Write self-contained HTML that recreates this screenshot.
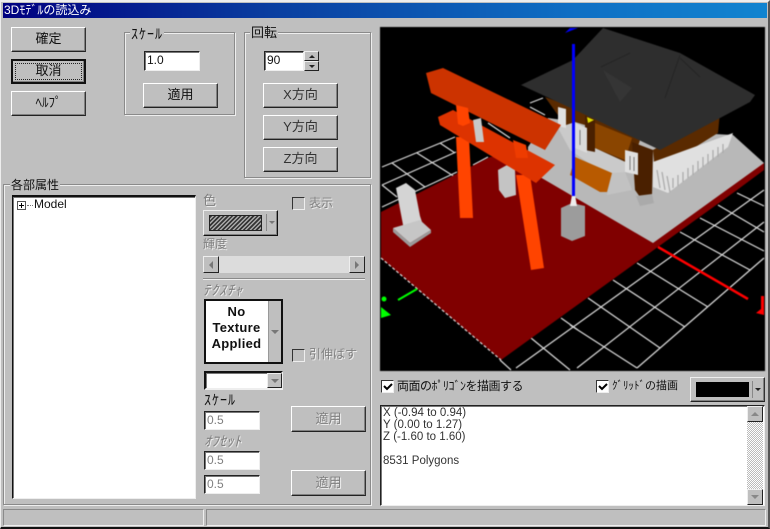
<!DOCTYPE html>
<html><head><meta charset="utf-8">
<style>
html,body{margin:0;padding:0}
body{width:770px;height:529px;overflow:hidden;position:relative;background:#bfbfbf;font:12px "Liberation Sans","Noto Sans CJK JP",sans-serif;color:#111}
div,span{position:absolute;box-sizing:border-box;white-space:nowrap}
.btn{background:#bfbfbf;border:1px solid;border-color:#fff #333 #222 #fff;box-shadow:inset -1px -1px 0 #808080;text-align:center;font-size:13px;line-height:22px;width:75px;height:25px}
.dis{color:#808080;text-shadow:1px 1px 0 #eee}
.inp{background:#fff;border:1px solid;border-color:#222 #eee #eee #222;box-shadow:inset 1px 1px 0 #777;padding-left:2px;font-size:12px;line-height:17px;width:56px;height:20px}
.grp{border:1px solid #8a8a8a;box-shadow:1px 1px 0 #eee,inset 1px 1px 0 #eee}
.leg{background:#bfbfbf;padding:0 1px;line-height:14px}
.chk{width:13px;height:13px;border:1px solid;border-color:#333 #eee #eee #333;background:#fff}
.arrow{width:15px;height:17px;background:#bfbfbf;border:1px solid;border-color:#eee #222 #222 #eee}
</style></head><body>
<div style="left:0;top:0;width:770px;height:529px;border:1px solid #222;border-left-color:#eee;border-top:2px solid #eee;border-right:2px solid #555;border-bottom:2px solid #111"></div>
<div style="left:3px;top:3px;width:764px;height:15px;background:linear-gradient(90deg,#000080,#0a3ea0 35%,#0f6fc4 75%,#1084d0);color:#fff;font-size:12px;line-height:15px;padding-left:1px">3Dﾓﾃﾞﾙの読込み</div>

<div class="btn" style="left:11px;top:27px">確定</div>
<div class="btn" style="left:11px;top:59px;border:2px solid #111;line-height:20px"><div style="left:2px;top:2px;width:67px;height:17px;border:1px dotted #222"></div>取消</div>
<div class="btn" style="left:11px;top:91px">ﾍﾙﾌﾟ</div>

<div class="grp" style="left:124px;top:32px;width:111px;height:83px"></div>
<div class="leg" style="left:130px;top:27px;font-size:14px;letter-spacing:1px">ｽｹｰﾙ</div>
<div class="inp" style="left:144px;top:51px">1.0</div>
<div class="btn" style="left:143px;top:83px">適用</div>

<div class="grp" style="left:244px;top:32px;width:127px;height:146px"></div>
<div class="leg" style="left:250px;top:26px;font-size:13px">回転</div>
<div class="inp" style="left:264px;top:51px;width:40px">90</div>
<div class="arrow" style="left:304px;top:51px;height:10px"><div style="left:4px;top:3px;border:3px solid transparent;border-top:0;border-bottom:3px solid #222;width:0;height:0"></div></div>
<div class="arrow" style="left:304px;top:61px;height:10px"><div style="left:4px;top:3px;border:3px solid transparent;border-bottom:0;border-top:3px solid #222;width:0;height:0"></div></div>
<div class="btn" style="left:263px;top:83px;color:#333">X方向</div>
<div class="btn" style="left:263px;top:115px;color:#333">Y方向</div>
<div class="btn" style="left:263px;top:147px;color:#333">Z方向</div>

<div class="grp" style="left:3px;top:184px;width:368px;height:321px"></div>
<div class="leg" style="left:10px;top:178px;font-size:12px">各部属性</div>
<div class="inp" style="left:12px;top:195px;width:184px;height:304px;border-width:2px 1px 1px 1px;border-color:#111 #eee #eee #111"></div>
<div style="left:17px;top:201px;width:9px;height:9px;border:1px solid #555;background:#fff"><div style="left:1px;top:3px;width:5px;height:1px;background:#000"></div><div style="left:3px;top:1px;width:1px;height:5px;background:#000"></div></div>
<div style="left:27px;top:205px;width:6px;border-top:1px dotted #777"></div>
<div style="left:34px;top:197px;line-height:14px">Model</div>

<div class="dis" style="left:203px;top:193px;line-height:16px;font-size:13px">色</div>
<div class="chk" style="left:292px;top:197px;background:#bfbfbf"></div>
<div class="dis" style="left:309px;top:196px;line-height:15px;font-size:12px">表示</div>
<div class="btn" style="left:203px;top:210px;height:26px;border-color:#eee #111 #111 #eee"><div style="left:5px;top:4px;width:53px;height:16px;border:1px solid #222;background:repeating-linear-gradient(135deg,#333 0,#333 1.5px,#aaa 1.5px,#aaa 3px)"></div><div style="left:62px;top:3px;width:1px;height:17px;background:#888"></div><div style="left:65px;top:10px;width:0;height:0;border:3px solid transparent;border-bottom:0;border-top:3px solid #777"></div></div>
<div class="dis" style="left:203px;top:236px;line-height:16px;font-size:12px">輝度</div>
<div style="left:203px;top:256px;width:162px;height:17px;background:#dcdcdc"></div>
<div class="arrow" style="left:203px;top:256px;width:16px"><div style="left:5px;top:4px;width:0;height:0;border:4px solid transparent;border-left:0;border-right:4px solid #777"></div></div>
<div class="arrow" style="left:349px;top:256px;width:16px"><div style="left:5px;top:4px;width:0;height:0;border:4px solid transparent;border-right:0;border-left:4px solid #777"></div></div>
<div style="left:203px;top:278px;width:162px;height:2px;background:#8a8a8a;border-bottom:1px solid #eee"></div>
<div class="dis" style="left:203px;top:283px;line-height:14px;font-size:14px;letter-spacing:1px;font-style:italic">ﾃｸｽﾁｬ</div>

<div style="left:204px;top:299px;width:79px;height:65px;background:#fff;border:2px solid #111;text-align:center;font-weight:bold;font-size:13px;line-height:16px;letter-spacing:.3px;padding:3px 14px 0 0;white-space:normal">No<br>Texture<br>Applied</div>
<div style="left:268px;top:301px;width:13px;height:61px;background:#bfbfbf;border-left:1px solid #999"><div style="left:2px;top:29px;width:0;height:0;border:4px solid transparent;border-bottom:0;border-top:4px solid #777"></div></div>
<div class="chk" style="left:292px;top:349px;background:#bfbfbf"></div>
<div class="dis" style="left:309px;top:347px;line-height:15px;font-size:12px">引伸ばす</div>
<div class="inp" style="left:204px;top:371px;width:79px;height:19px;border-width:2px;border-color:#111 #eee #eee #111"><div style="left:61px;top:0;width:15px;height:15px;background:#bfbfbf;border:1px solid;border-color:#eee #222 #222 #eee"><div style="left:3px;top:5px;width:0;height:0;border:4px solid transparent;border-bottom:0;border-top:4px solid #777"></div></div></div>
<div style="left:204px;top:393px;line-height:14px;font-size:14px;letter-spacing:1px">ｽｹｰﾙ</div>
<div class="inp dis" style="left:204px;top:411px;height:19px;text-shadow:none">0.5</div>
<div class="btn dis" style="left:291px;top:406px;height:26px;line-height:23px">適用</div>
<div class="dis" style="left:204px;top:434px;line-height:14px;font-size:14px;letter-spacing:.5px;font-style:italic">ｵﾌｾｯﾄ</div>
<div class="inp dis" style="left:204px;top:451px;height:19px;text-shadow:none">0.5</div>
<div class="inp dis" style="left:204px;top:475px;height:19px;text-shadow:none">0.5</div>
<div class="btn dis" style="left:291px;top:470px;height:26px;line-height:23px">適用</div>

<!-- 3D viewport -->
<svg style="position:absolute;left:380px;top:27px;filter:blur(.4px)" width="385" height="344" viewBox="380 27 385 344">
<rect x="380" y="27" width="385" height="344" fill="#000"/>
<g stroke="#ddd" stroke-width="1.2" fill="none">
<path d="M737 193L764 206M718 205L764 232M700 218L764 251M680 232L750 270M637 263L708 307M613 280L685 327M588 298L660 348M570 325L637 368M531 338L570 370M561 318L578 330M500 360L511 370"/>
<path d="M637 368L764 258M577 368L764 222M516 368L764 190"/>
<path d="M382 167L455 137M382 185L456 152M382 207L457 172M473 165L488 157M392 163L425 187M417 153L455 177M440 143L455 153M382 185L397 197M530 103L543 98M530 107L545 115M488 123L510 138"/>
</g>
<polygon points="381,212 490,157 600,150 730,160 764,163 764,170 737,190 501,360 381,258" fill="#800000"/>
<path d="M381 258L501 360" stroke="#ddd" stroke-width="1.2" stroke-dasharray="3 2" fill="none"/>
<!-- platform -->
<polygon points="528,170 528,147 548,118 640,130 733,135 764,163 653,243" fill="#b8b8b8"/>
<polygon points="558,128 575,122 625,150 625,172 610,178 570,150" fill="#cacaca"/>
<polygon points="612,173 625,172 632,190 607,195" fill="#c2c2c2"/>
<!-- walls -->
<polygon points="545,97 575,108 640,140 632,165 595,148 585,150 585,125 575,122 566,125 560,118" fill="#5a2a00"/>
<polygon points="595,123 632,138 625,160 595,148" fill="#8a4500"/>
<polygon points="585,115 595,120 595,152 585,150" fill="#4a2000"/>
<polygon points="653,150 720,112 718,133 655,172" fill="#5a2a00"/>
<polygon points="632,142 653,150 652,195 640,197 635,190" fill="#4a2000"/>
<polygon points="636,196 652,194 654,203 640,206" fill="#aaa"/>
<polygon points="558,107 566,109 566,128 558,126" fill="#e0e0e0"/>
<polygon points="575,123 587,128 587,153 575,148" fill="#dadada"/>
<polygon points="625,150 638,153 638,175 625,172" fill="#e0e0e0"/>
<path d="M630 156V170M634 157V171M580 130V145" stroke="#777" stroke-width="1"/>
<!-- box -->
<polygon points="575,157 612,173 607,192 600,192 570,175" fill="#b85a00"/>
<!-- railing -->
<polygon points="653,162 733,133 728,147 668,193 653,187" fill="#e0e0e0"/>
<path d="M657 170L660 188M662 172L665 190M667 176L670 192M673 178V188M678 175V186M683 172V182M688 168V178M693 165V175M698 161V171M703 157V167M708 154V164M713 150V160M718 147V157M723 144V153" stroke="#a8a8a8" stroke-width="1.2"/>
<!-- roof -->
<polygon points="521,85 573,60 603,28 680,53 755,95 750,102 660,150 575,110" fill="#2e2e2e"/>
<path d="M601 67L630 53M680 55L665 98M680 58L700 77" fill="none" stroke="#252525" stroke-width="1"/>
<polygon points="603,70 632,88 620,102" fill="#353535"/>
<polygon points="587,117 594,120 588,123" fill="#dd0"/>
<!-- right post -->
<polygon points="561,208 572,203 585,206 585,236 572,241 561,236" fill="#9c9c9c"/>
<polygon points="570,206 572,195 575,195 577,206" fill="#eee"/>
<rect x="572" y="44" width="3" height="152" fill="#00f"/>
<polygon points="565,33 570,28 578,28" fill="#00f"/>
<!-- stone lantern and monument -->
<polygon points="498,170 507,165 515,170 516,195 505,198 499,190" fill="#c4c4c4"/>
<polygon points="396,188 406,183 415,190 420,216 422,222 404,230" fill="#d4d4d4"/>
<polygon points="393,228 420,220 431,230 410,243" fill="#c6c6c6"/>
<polygon points="393,228 410,243 431,230 431,233 410,247 393,232" fill="#9a9a9a"/>
<!-- torii -->
<polygon points="456,137 469,137 473,218 460,218" fill="#ff4400"/>
<polygon points="516,175 530,175 544,268 531,270" fill="#ff4400"/>
<polygon points="438,117 453,110 555,165 536,183 440,125" fill="#dd3300"/>
<polygon points="426,73 443,68 561,125 545,150 431,93" fill="#cc3300"/>
<polygon points="456,105 468,108 470,123 463,126 458,124" fill="#ff4400"/>
<polygon points="513,140 526,145 528,158 516,158" fill="#ee3c00"/>
<polygon points="473,120 481,118 484,142 476,142" fill="#c8c8c8"/>
<!-- axes -->
<path d="M398 300L417 289" stroke="#0f0" stroke-width="2"/>
<circle cx="384" cy="299" r="2.5" fill="#0f0"/>
<polygon points="381,307 391,315 381,318" fill="#0f0"/>
<path d="M658 247L748 299" stroke="#f00" stroke-width="2.5"/>
<polygon points="761,296 764,296 764,315 756,313 761,309" fill="#f00"/>
</svg>

<div class="chk" style="left:381px;top:380px"><svg style="position:absolute;left:1px;top:1px" width="10" height="10"><path d="M1 4L4 7L9 2" stroke="#000" stroke-width="2" fill="none"/></svg></div>
<div style="left:397px;top:378px;font-size:12px;letter-spacing:-.5px;line-height:16px">両面のﾎﾟﾘｺﾞﾝを描画する</div>
<div class="chk" style="left:596px;top:380px"><svg style="position:absolute;left:1px;top:1px" width="10" height="10"><path d="M1 4L4 7L9 2" stroke="#000" stroke-width="2" fill="none"/></svg></div>
<div style="left:612px;top:378px;font-size:11px;line-height:16px">ｸﾞﾘｯﾄﾞの描画</div>
<div class="btn" style="left:690px;top:377px;height:25px;border-color:#eee #333 #222 #eee"><div style="left:5px;top:4px;width:53px;height:15px;background:#000"></div><div style="left:61px;top:3px;width:1px;height:17px;background:#888"></div><div style="left:64px;top:10px;width:0;height:0;border:3px solid transparent;border-bottom:0;border-top:3px solid #222"></div></div>

<div style="left:380px;top:405px;width:385px;height:101px;background:#fff;border:1px solid;border-color:#222 #eee #eee #222;box-shadow:inset 1px 1px 0 #777;padding:1px 0 0 2px;font-size:11.5px;line-height:12px;color:#333;white-space:pre">X (-0.94 to 0.94)
Y (0.00 to 1.27)
Z (-1.60 to 1.60)

8531 Polygons</div>
<div style="left:747px;top:406px;width:16px;height:99px;background:repeating-conic-gradient(#fff 0 25%,#bbb 0 50%) 0 0/2px 2px"></div>
<div class="arrow" style="left:747px;top:406px;width:16px;height:16px"><div style="left:3px;top:5px;width:0;height:0;border:4px solid transparent;border-top:0;border-bottom:4px solid #888"></div></div>
<div class="arrow" style="left:747px;top:489px;width:16px;height:16px"><div style="left:3px;top:5px;width:0;height:0;border:4px solid transparent;border-bottom:0;border-top:4px solid #888"></div></div>

<div style="left:3px;top:509px;width:201px;height:17px;border:1px solid;border-color:#8a8a8a #eee #eee #8a8a8a"></div>
<div style="left:206px;top:509px;width:560px;height:17px;border:1px solid;border-color:#8a8a8a #eee #eee #8a8a8a"></div>
</body></html>
